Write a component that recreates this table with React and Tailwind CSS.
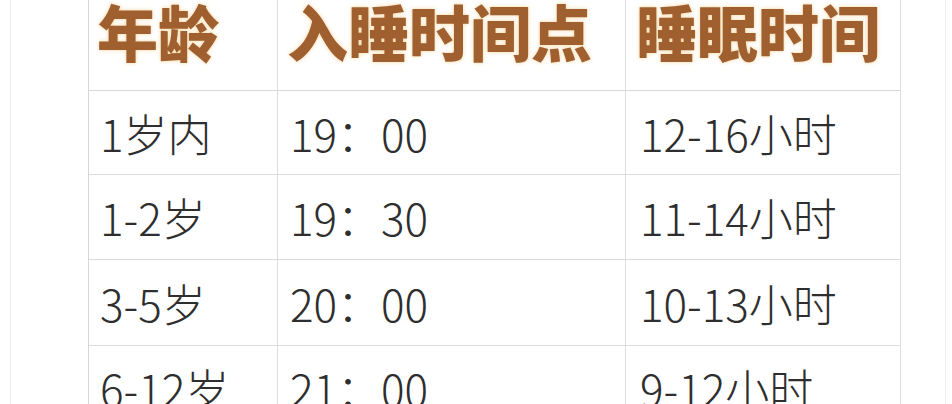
import React from "react";

const rows = [
  { age: "1岁内", bed: "19：00", sleep: "12-16小时", h: "h-[84px]" },
  { age: "1-2岁", bed: "19：30", sleep: "11-14小时", h: "h-[85px]" },
  { age: "3-5岁", bed: "20：00", sleep: "10-13小时", h: "h-[86px]" },
  { age: "6-12岁", bed: "21：00", sleep: "9-12小时", h: "h-[85px]" },
];

const font = { fontFamily: '"Noto Sans CJK SC", "Noto Sans", sans-serif' };

const App = () => {
  return (
    <div
      className="w-[952px] h-[404px] overflow-hidden bg-white flex pl-[10px] pr-[6px]"
      style={font}
    >
      <div className="flex-1 border-l border-r border-[#ededed] pl-[77px]">
        <div className="w-[813px] border-l border-[#d6d6d6]">
          <div className="grid grid-cols-[189px_348px_275px] h-[91px] border-b border-[#d8d8d8]">
            {["年龄", "入睡时间点", "睡眠时间"].map((t, i) => (
              <div
                key={i}
                className={`border-r border-[#dedede] text-[61px] leading-[62px] font-black text-[#9f5f2e] [text-shadow:0_0_4px_#f6d6a0] ${
                  i === 0 ? "pl-[8px]" : i === 1 ? "pl-[9px]" : "pl-[10px]"
                }`}
              >
                {t}
              </div>
            ))}
          </div>
          {rows.map((r, i) => (
            <div
              key={i}
              className={`grid grid-cols-[189px_348px_275px] ${r.h} border-b border-[#dcdcdc]`}
            >
              <div className="border-r border-[#dedede] flex items-center pl-[11px] text-[44px] font-light text-[#2e2e2e]">
                {r.age}
              </div>
              <div className="border-r border-[#dedede] flex items-center pl-[12px] text-[44px] font-light text-[#2e2e2e]">
                {r.bed}
              </div>
              <div className="border-r border-[#dedede] flex items-center pl-[14px] text-[44px] font-light text-[#2e2e2e]">
                {r.sleep}
              </div>
            </div>
          ))}
        </div>
      </div>
    </div>
  );
};

export default App;
